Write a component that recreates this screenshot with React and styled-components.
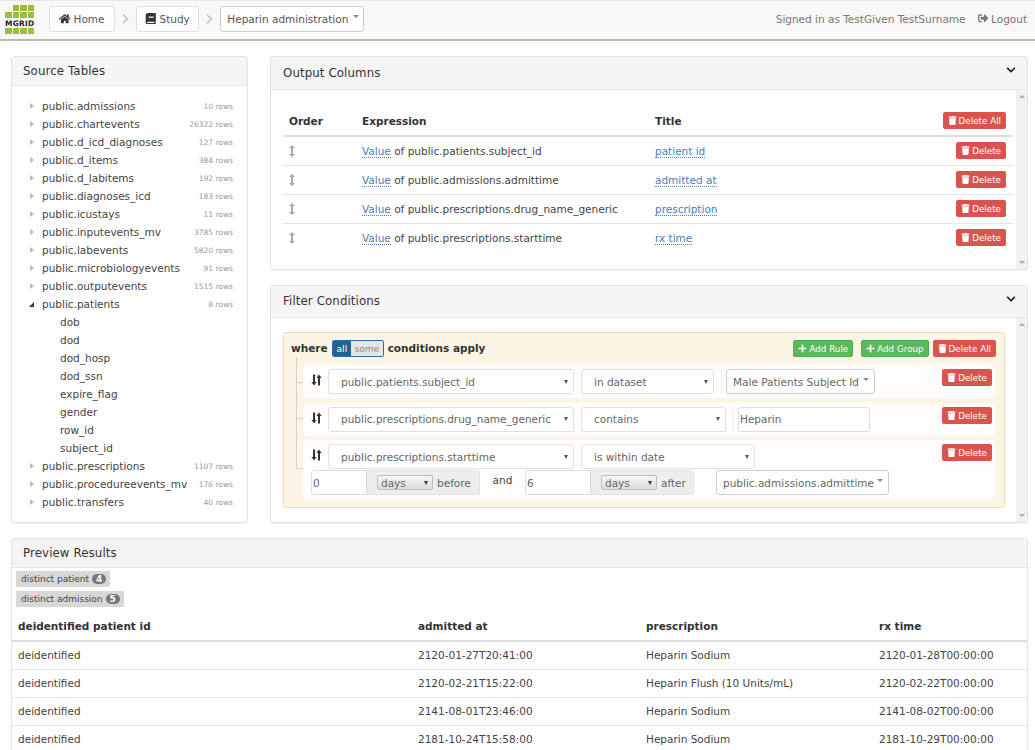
import React from 'react';
import styled, { createGlobalStyle } from 'styled-components';
import { FaHome, FaBook, FaTrash, FaPlus, FaSignOutAlt, FaChevronDown } from 'react-icons/fa';

const Global = createGlobalStyle`
  html, body { margin: 0; padding: 0; height: 750px; overflow: hidden; background: #fff; }
  body { font-family: "DejaVu Sans", sans-serif; font-size: 10.5px; color: #333; }
  * { box-sizing: border-box; }
`;

const Page = styled.div`display: flex; flex-direction: column; width: 1035px; height: 750px; overflow: hidden;`;
const NavBar = styled.header`
  flex: none; height: 41px; background: #f8f8f8; border-top: 1px solid #e7e7e7; border-bottom: 2px solid #b6bcac;
  display: flex; align-items: center; padding: 0 8px 3px 5px;
`;
const Logo = styled.div`display: flex; flex-direction: column; width: 29px; margin-right: 15px; margin-top: 2px;`;
const LogoRow = styled.div`display: flex; justify-content: ${p => p.$end ? 'flex-end' : 'flex-start'}; gap: 1px; height: 6px; margin-bottom: 1px;`;
const LogoCell = styled.i`display: block; width: 6.5px; height: 6px; background: #9bbf3a;`;
const LogoText = styled.b`display: block; font: bold 7.5px/8px "DejaVu Sans", sans-serif; letter-spacing: .2px; color: #222; text-align: center; margin: 1px 0 0;`;
const Crumb = styled.button`
  height: 26px; padding: 0 ${p => p.$px || 9}px; border: 1px solid #ddd; border-radius: 3px; background: #fff; color: #555;
  font: 10.5px "DejaVu Sans", sans-serif; display: inline-flex; align-items: center; gap: 3px; white-space: nowrap;
  svg { color: #333; font-size: 11.5px; }
`;
const Sep = styled.svg`flex: none; margin: 0 7px; color: #bbb;`;
const DropCrumb = styled(Crumb)`border-color: #ccc; padding: 0 4px 0 6px; gap: 5px;`;
const Caret = styled.i`display: inline-block; flex: none; width: 0; height: 0; border-left: ${p => p.$s || 3}px solid transparent; border-right: ${p => p.$s || 3}px solid transparent; border-top: ${p => p.$s ? 4 : 3}px solid ${p => p.$c || '#888'}; margin-top: ${p => p.$mt ?? -4}px;`;
const Spacer = styled.div`flex: 1;`;
const NavText = styled.span`color: #777; white-space: nowrap; display: inline-flex; align-items: center; gap: 3px; margin-left: ${p => p.$ml || 0}px;`;

const Main = styled.div`flex: none; display: flex; gap: 22px; padding: 15px 7px 0 11px; height: 482px;`;
const Panel = styled.section`
  background: #fff; border: 1px solid #e3e3e3; border-radius: 3px; box-shadow: 0 1px 1px rgba(0,0,0,.05); overflow: hidden;
`;
const Left = styled(Panel)`flex: none; width: 237px; height: 467px;`;
const Right = styled.div`flex: 1; display: flex; flex-direction: column; gap: 15px; min-width: 0;`;
const PanelHead = styled.div`
  height: ${p => p.$h || 33}px; background: #f5f5f5; border-bottom: 1px solid #e6e6e6; padding: 0 11px ${p => p.$pb || 0}px ${p => p.$pl || 11}px; display: flex; align-items: center; justify-content: space-between;
  font-size: 11.8px; color: #333; letter-spacing: .1px;
  svg { font-size: 10px; color: #222; margin-top: ${p => p.$cm ?? -7}px; }
`;
const Tree = styled.ul`list-style: none; margin: 0; padding: 11px 14px 0 15px;`;
const TreeRow = styled.li`height: 18px; display: flex; align-items: center; padding-left: ${p => p.$child ? 33 : 0}px; color: #444;`;
const Arrow = styled.i`
  width: 0; height: 0; margin: 0 7px 0 3px; flex: none; display: block;
  ${p => p.$open
    ? 'border-bottom: 5px solid #333; border-left: 5px solid transparent; margin-left: 2px; margin-right: 8px;'
    : 'border-left: 4px solid #bbb; border-top: 3.5px solid transparent; border-bottom: 3.5px solid transparent; margin-right: 8px;'}
`;
const RowCount = styled.span`margin-left: auto; font-size: 7.5px; color: #999; white-space: nowrap;`;

const OutputPanel = styled(Panel)`height: 214px; flex: none;`;
const FilterPanel = styled(Panel)`height: 238px; flex: none;`;
const ScrollWrap = styled.div`display: flex; height: calc(100% - ${p => p.$head}px);`;
const Scroll = styled.div`flex: 1; min-width: 0; padding: ${p => p.$p};`;
const ScrollBar = styled.div`
  flex: none; width: 11px; background: #f1f1f1; display: flex; flex-direction: column; justify-content: space-between; align-items: center; padding: 5px 0;
`;
const UpTri = styled.i`width: 0; height: 0; border-left: 3px solid transparent; border-right: 3px solid transparent; border-bottom: 3px solid #aaa;`;
const DownTri = styled.i`width: 0; height: 0; border-left: 3px solid transparent; border-right: 3px solid transparent; border-top: 3px solid #aaa;`;

const Table = styled.table`width: 100%; border-collapse: collapse; table-layout: fixed; font-size: 10.5px;`;
const Th = styled.th`text-align: left; font-weight: bold; color: #333; padding: 0 0 2px 6px; height: 28px; border-bottom: 2px solid #ddd; vertical-align: middle; white-space: nowrap;`;
const Td = styled.td`padding: ${p => p.$pt || 0}px 0 0 6px; height: ${p => p.$h || 29}px; border-bottom: ${p => p.$last ? 0 : '1px solid #e6e6e6'}; vertical-align: middle; color: #444; white-space: nowrap;`;
const RightCell = styled.div`display: flex; justify-content: flex-end; padding-right: 7px;`;
const Dotted = styled.a`color: #4a80bd; border-bottom: 1px dotted #4a80bd; text-decoration: none;`;
const Grip = styled.svg`display: block; color: #aaa;`;

const Btn = styled.button`
  height: 17px; padding: 0 4px; border: 1px solid ${p => p.$green ? '#4cae4c' : '#d9534f'}; border-radius: 2px; background: ${p => p.$green ? '#5cb85c' : '#d9534f'};
  color: #fff; font: 8.75px "DejaVu Sans", sans-serif; display: inline-flex; align-items: center; gap: 2px; white-space: nowrap; flex: none;
  margin-right: ${p => p.$mr || 0}px;
  svg { font-size: 9px; }
`;

const Group = styled.div`
  position: relative; border: 1px solid #e9dbb3; border-radius: 3px; background: #fcf4e5; height: 176px; width: 722px; padding: 6px 7px 0 7px;
`;
const GroupHead = styled.div`height: 19px; display: flex; align-items: center; font-weight: bold; color: #333; gap: 4px; margin-bottom: 7px;`;
const GroupWord = styled.span`margin-top: -2px;`;
const Toggle = styled.span`display: inline-flex; height: 17px; border: 1px solid #2e6da4; border-radius: 2px; overflow: hidden; font-weight: normal; font-size: 9px;`;
const ToggleItem = styled.span`display: flex; align-items: center; padding: 0 ${p => p.$on ? 4 : 3.5}px; background: ${p => p.$on ? '#286090' : '#e6e6e6'}; color: ${p => p.$on ? '#fff' : '#888'};`;
const GroupBtns = styled.div`margin-left: auto; margin-right: 1px; display: flex; gap: 4px;`;
const Tick = styled.i`position: absolute; left: 12px; top: ${p => p.$y}px; width: ${p => p.$w || 8}px; height: ${p => p.$h || 1}px; background: #d5d0c3;`;
const Rule = styled.div`
  margin-left: 12px; width: 692px; background: #fefdfb; border-radius: 3px; padding: 4px 3px 0 8px; height: ${p => p.$h || 33}px; margin-bottom: ${p => p.$mb ?? 5}px; position: relative; font-size: 10.5px;
`;
const RuleLine = styled.div`display: flex; align-items: flex-start; margin-top: ${p => p.$mt || 0}px;`;
const SortIcon = styled.svg`flex: none; margin: 5px 6px 0 0; color: #333;`;
const Select = styled.div`
  flex: none; width: ${p => p.$w}px; height: 25px; border: 1px solid ${p => p.$strong ? '#ccc' : '#e0e0e0'}; border-radius: 3px; background: #fff; color: #666; display: flex; align-items: center; justify-content: space-between; padding: 0 ${p => p.$pr || 5}px ${p => p.$pb || 0}px ${p => p.$pl || 12}px; margin-right: ${p => p.$mr ?? 7}px; margin-left: ${p => p.$ml || 0}px; white-space: nowrap;
`;
const Divider = styled.i`flex: none; display: block; width: 1px; height: 25px; background: #eee; margin-right: 4px;`;
const Input = styled.div`flex: none; width: ${p => p.$w}px; height: 25px; border: 1px solid #ddd; border-radius: ${p => p.$join ? '3px 0 0 3px' : '3px'}; background: #fff; color: #666; display: flex; align-items: center; padding: 0 1px ${p => p.$pb || 0}px;`;
const RuleDelete = styled(Btn)`position: absolute; right: 3px; top: ${p => p.$t ?? 4}px;`;
const Addon = styled.div`flex: none; width: ${p => p.$w}px; height: 25px; background: #eee; border: 1px solid #e4e4e4; border-left: 0; border-radius: 0 3px 3px 0; display: flex; align-items: center; padding-left: 10px; gap: 4px; color: #666;`;
const MiniSelect = styled.span`display: inline-flex; align-items: center; justify-content: space-between; width: 56px; height: 15px; padding: 0 4px 0 3px; border: 1px solid #bbb; border-radius: 2px; background: linear-gradient(#f5f5f5, #ddd); color: #666;`;
const AndLabel = styled.span`flex: none; width: 45px; text-align: center; color: #444; margin-top: -5px; align-self: center;`;

const Preview = styled(Panel)`flex: none; margin: 15px 7px 0 11px; height: 260px;`;
const Chips = styled.div`display: flex; flex-direction: column; align-items: flex-start; gap: 4px; padding: 3px 4px 0 4px; height: 45px;`;
const Chip = styled.span`height: 16px; background: #d8d8d8; border-radius: 1px; display: inline-flex; align-items: center; padding: 0 4px 0 5px; gap: 3px; font-size: 9px; color: #444;`;
const Badge = styled.b`display: inline-flex; align-items: center; justify-content: center; width: 14px; height: 10px; border-radius: 6px; background: #777; color: #fff; font-size: 9px; line-height: 1;`;

const tables = [
  ['public.admissions', '10 rows'], ['public.chartevents', '26322 rows'], ['public.d_icd_diagnoses', '127 rows'],
  ['public.d_items', '384 rows'], ['public.d_labitems', '192 rows'], ['public.diagnoses_icd', '183 rows'],
  ['public.icustays', '11 rows'], ['public.inputevents_mv', '3785 rows'], ['public.labevents', '5820 rows'],
  ['public.microbiologyevents', '91 rows'], ['public.outputevents', '1515 rows'],
];
const tail = [['public.prescriptions', '1107 rows'], ['public.procedureevents_mv', '176 rows'], ['public.transfers', '40 rows']];
const cols = ['dob', 'dod', 'dod_hosp', 'dod_ssn', 'expire_flag', 'gender', 'row_id', 'subject_id'];
const outputs = [
  ['public.patients.subject_id', 'patient id'], ['public.admissions.admittime', 'admitted at'],
  ['public.prescriptions.drug_name_generic', 'prescription'], ['public.prescriptions.starttime', 'rx time'],
];
const results = [
  ['2120-01-27T20:41:00', 'Heparin Sodium', '2120-01-28T00:00:00'],
  ['2120-02-21T15:22:00', 'Heparin Flush (10 Units/mL)', '2120-02-22T00:00:00'],
  ['2141-08-01T23:46:00', 'Heparin Sodium', '2141-08-02T00:00:00'],
  ['2181-10-24T15:58:00', 'Heparin Sodium', '2181-10-29T00:00:00'],
];

const TableRow = ({ name, count, open }) => (
  <TreeRow><Arrow $open={open} />{name}<RowCount>{count}</RowCount></TreeRow>
);
const GripIcon = () => (
  <Grip width="6" height="12" viewBox="0 0 6 12"><path d="M3 0 L6 3 H4 V9 H6 L3 12 L0 9 H2 V3 H0 Z" fill="currentColor" /></Grip>
);
const Sort = () => (
  <SortIcon width="11" height="12" viewBox="0 0 11 12"><path d="M2 0.5h2v7.5h1.6L3 11.5 0.4 8H2zM7 11.5h2V4h1.6L8 0.5 5.4 4H7z" fill="currentColor" /></SortIcon>
);
const CrumbSep = () => (
  <Sep width="7" height="10" viewBox="0 0 7 10"><path d="M1 0.8 L5.4 5 L1 9.2" fill="none" stroke="currentColor" strokeWidth="1.5" /></Sep>
);
const Del = ({ children = 'Delete' }) => <Btn><FaTrash />{children}</Btn>;
const RDel = ({ t }) => <RuleDelete $t={t}><FaTrash />Delete</RuleDelete>;

export default function App() {
  return (
    <Page>
      <Global />
      <NavBar>
        <Logo>
          <LogoRow $end>{[0, 1, 2].map(i => <LogoCell key={i} />)}</LogoRow>
          <LogoRow>{[0, 1, 2, 3].map(i => <LogoCell key={i} />)}</LogoRow>
          <LogoText>MGRID</LogoText>
          <LogoRow>{[0, 1, 2, 3].map(i => <LogoCell key={i} />)}</LogoRow>
        </Logo>
        <Crumb><FaHome />Home</Crumb>
        <CrumbSep />
        <Crumb $px={8.5}><FaBook />Study</Crumb>
        <CrumbSep />
        <DropCrumb>Heparin administration<Caret /></DropCrumb>
        <Spacer />
        <NavText>Signed in as TestGiven TestSurname</NavText>
        <NavText $ml={12}><FaSignOutAlt />Logout</NavText>
      </NavBar>

      <Main>
        <Left>
          <PanelHead $h={29}>Source Tables</PanelHead>
          <Tree>
            {tables.map(([n, c]) => <TableRow key={n} name={n} count={c} />)}
            <TableRow name="public.patients" count="8 rows" open />
            {cols.map(c => <TreeRow key={c} $child>{c}</TreeRow>)}
            {tail.map(([n, c]) => <TableRow key={n} name={n} count={c} />)}
          </Tree>
        </Left>
        <Right>
          <OutputPanel>
            <PanelHead $pl={12}>Output Columns<FaChevronDown /></PanelHead>
            <ScrollWrap $head={33}>
              <Scroll $p="18px 3px 0 12px">
                <Table>
                  <colgroup><col width="73" /><col width="293" /><col /><col width="80" /></colgroup>
                  <thead>
                    <tr>
                      <Th>Order</Th><Th>Expression</Th><Th>Title</Th>
                      <Th><RightCell><Del>Delete All</Del></RightCell></Th>
                    </tr>
                  </thead>
                  <tbody>
                    {outputs.map(([e, t], i) => (
                      <tr key={t}>
                        <Td $last={i === 3}><GripIcon /></Td>
                        <Td $last={i === 3} $pt={1}><Dotted>Value</Dotted> of {e}</Td>
                        <Td $last={i === 3} $pt={1}><Dotted>{t}</Dotted></Td>
                        <Td $last={i === 3}><RightCell><Del /></RightCell></Td>
                      </tr>
                    ))}
                  </tbody>
                </Table>
              </Scroll>
              <ScrollBar><UpTri /><DownTri /></ScrollBar>
            </ScrollWrap>
          </OutputPanel>

          <FilterPanel>
            <PanelHead $h={32} $pl={12} $pb={2} $cm={-4}>Filter Conditions<FaChevronDown /></PanelHead>
            <ScrollWrap $head={32}>
              <Scroll $p="14px 0 0 12px">
                <Group>
                  <Tick $y={24} $w={1} $h={111} />
                  <Tick $y={49} />
                  <Tick $y={85} />
                  <Tick $y={135} />
                  <GroupHead>
                    <GroupWord>where</GroupWord>
                    <Toggle><ToggleItem $on>all</ToggleItem><ToggleItem>some</ToggleItem></Toggle>
                    <GroupWord>conditions apply</GroupWord>
                    <GroupBtns>
                      <Btn $green $mr={4}><FaPlus />Add Rule</Btn>
                      <Btn $green><FaPlus />Add Group</Btn>
                      <Del>Delete All</Del>
                    </GroupBtns>
                  </GroupHead>
                  <Rule>
                    <RuleLine>
                      <Sort />
                      <Select $w={246}>public.patients.subject_id<Caret $s={2} $c="#555" $mt={0} /></Select>
                      <Select $w={133}>in dataset<Caret $s={2} $c="#555" $mt={0} /></Select>
                      <Divider />
                      <Select $w={149} $strong $pl={6}>Male Patients Subject Id<Caret $mt={-4} /></Select>
                    </RuleLine>
                    <RDel />
                  </Rule>
                  <Rule $mb={4}>
                    <RuleLine>
                      <Sort />
                      <Select $w={246} $pb={2}>public.prescriptions.drug_name_generic<Caret $s={2} $c="#555" $mt={0} /></Select>
                      <Select $w={145} $pb={2}>contains<Caret $s={2} $c="#555" $mt={0} /></Select>
                      <Divider />
                      <Input $w={132} $pb={2}>Heparin</Input>
                    </RuleLine>
                    <RDel />
                  </Rule>
                  <Rule $h={59} $mb={0}>
                    <RuleLine>
                      <Sort />
                      <Select $w={246}>public.prescriptions.starttime<Caret $s={2} $c="#555" $mt={0} /></Select>
                      <Select $w={174}>is within date<Caret $s={2} $c="#555" $mt={0} /></Select>
                    </RuleLine>
                    <RuleLine $mt={1}>
                      <Input $w={56} $join>0</Input>
                      <Addon $w={113}><MiniSelect>days<Caret $s={2} $c="#333" $mt={0} /></MiniSelect>before</Addon>
                      <AndLabel>and</AndLabel>
                      <Input $w={66} $join>6</Input>
                      <Addon $w={103}><MiniSelect>days<Caret $s={2} $c="#333" $mt={0} /></MiniSelect>after</Addon>
                      <Select $w={173} $strong $pl={6} $ml={22}>public.admissions.admittime<Caret $mt={-4} /></Select>
                    </RuleLine>
                    <RDel />
                  </Rule>
                </Group>
              </Scroll>
              <ScrollBar><UpTri /><DownTri /></ScrollBar>
            </ScrollWrap>
          </FilterPanel>
        </Right>
      </Main>

      <Preview>
        <PanelHead $h={29}>Preview Results</PanelHead>
        <Chips>
          <Chip>distinct patient <Badge>4</Badge></Chip>
          <Chip>distinct admission <Badge>5</Badge></Chip>
        </Chips>
        <Table>
          <colgroup><col width="400" /><col width="228" /><col width="233" /><col /></colgroup>
          <thead>
            <tr><Th>deidentified patient id</Th><Th>admitted at</Th><Th>prescription</Th><Th>rx time</Th></tr>
          </thead>
          <tbody>
            {results.map(([a, p, r], i) => (
              <tr key={i}>
                <Td $h={28}>deidentified</Td><Td $h={28}>{a}</Td><Td $h={28}>{p}</Td><Td $h={28}>{r}</Td>
              </tr>
            ))}
          </tbody>
        </Table>
      </Preview>
    </Page>
  );
}
